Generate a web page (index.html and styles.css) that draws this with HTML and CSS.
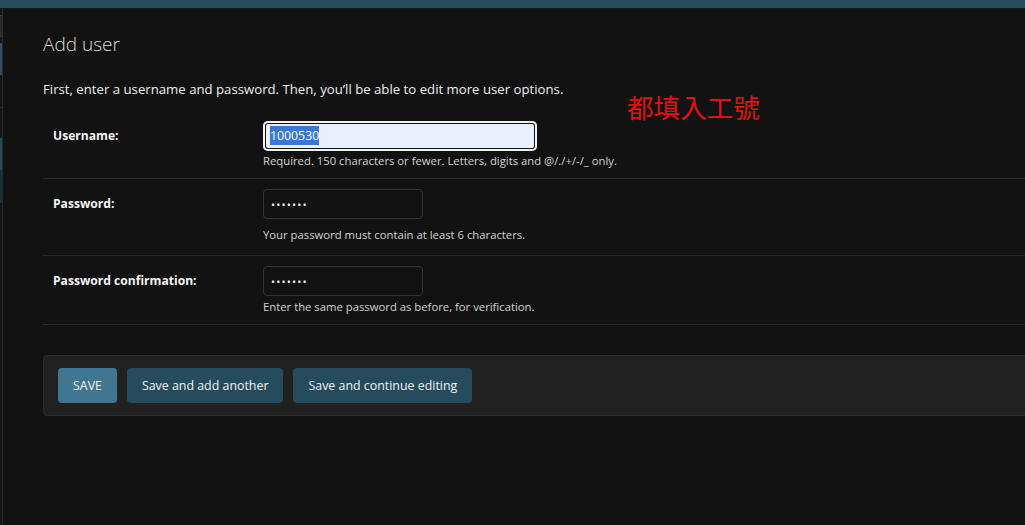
FILE: index.html
```html
<!DOCTYPE html>
<html lang="en">
<head>
<meta charset="utf-8">
<title>Add user</title>
<link rel="stylesheet" href="styles.css">
</head>
<body>
<header class="topbar"></header>
<div class="layout">
  <nav class="sidebar">
    <div class="sb-gap"></div>
    <div class="sb-search"></div>
    <div class="sb-gap"></div>
    <div class="sb-caption"></div>
    <div class="sb-row sb-row-line"></div>
    <div class="sb-row"></div>
    <div class="sb-caption sb-caption-alt"></div>
    <div class="sb-current"></div>
  </nav>
  <main class="content">
    <h1 class="title">Add user</h1>
    <p class="intro">First, enter a username and password. Then, you’ll be able to edit more user options.</p>
    <fieldset class="module">
      <div class="form-row row-first">
        <label class="field-label" for="id_username">Username:</label>
        <div class="field-box">
          <div class="fake-input focused" id="id_username"><span class="selected">1000530</span></div>
          <div class="help">Required. 150 characters or fewer. Letters, digits and @/./+/-/_ only.</div>
        </div>
      </div>
      <div class="form-row">
        <label class="field-label" for="id_password1">Password:</label>
        <div class="field-box">
          <input class="pw-input" type="password" id="id_password1" value="1234567">
          <div class="help help-list">Your password must contain at least 6 characters.</div>
        </div>
      </div>
      <div class="form-row">
        <label class="field-label" for="id_password2">Password confirmation:</label>
        <div class="field-box">
          <input class="pw-input" type="password" id="id_password2" value="1234567">
          <div class="help help-last">Enter the same password as before, for verification.</div>
        </div>
      </div>
    </fieldset>
    <div class="submit-row">
      <button class="btn btn-default" type="button">SAVE</button>
      <button class="btn" type="button">Save and add another</button>
      <button class="btn" type="button">Save and continue editing</button>
    </div>
  </main>
</div>
<div class="note">都填入工號</div>
</body>
</html>
```

FILE: styles.css
```css
html, body {
  margin: 0;
  padding: 0;
}

body {
  background: #121212;
  color: #eeeeee;
  font-family: "Open Sans", "Noto Sans", "Noto Sans CJK TC", sans-serif;
  height: 525px;
  overflow: hidden;
  position: relative;
}

.topbar {
  height: 8px;
  background: #264b5d;
  border-bottom: 1px solid #0f181c;
}

.layout {
  display: flex;
  height: 516px;
  overflow: hidden;
}

.sidebar {
  width: 2px;
  flex: 0 0 2px;
  background: #151515;
  border-right: 1px solid #2a2a2a;
  display: flex;
  flex-direction: column;
}

.sb-gap { height: 6px; }
.sb-search {
  height: 20px;
  background: #2a2a2a;
  border-top: 1px solid #3a3a3a;
  border-bottom: 1px solid #3a3a3a;
}
.sb-caption { height: 32px; background: #2b5266; }
.sb-caption-alt { background: #264b5d; }
.sb-row { height: 30px; }
.sb-row-line { height: 32px; border-bottom: 1px solid #2a2a2a; }
.sb-current { height: 33px; background: #0d393e; }

.content {
  flex: 1;
  min-width: 0;
  padding: 23px 0 0 40px;
}

.title {
  margin: 0 0 23px;
  font-size: 19px;
  font-weight: 300;
  line-height: 24px;
  color: #dcdcdc;
}

.intro {
  margin: 0;
  font-size: 13.2px;
  line-height: 20px;
  color: #eeeeee;
}

.module {
  margin: 12px 0 0;
  padding: 0;
  border: 0;
  min-width: 0;
}

.form-row {
  display: flex;
  padding: 10px;
  border-bottom: 1px solid #2a2a2a;
}

.field-label {
  flex: 0 0 210px;
  font-size: 12.1px;
  font-weight: 700;
  line-height: 30px;
  color: #f5f5f5;
}

.field-box {
  display: flex;
  flex-direction: column;
  align-items: flex-start;
}

.fake-input {
  box-sizing: border-box;
  width: 274px;
  height: 30px;
  padding: 0 7px;
  background: #e8f0fe;
  border-radius: 5px;
  box-shadow: inset 0 0 0 2px #f2f2f2, inset 0 0 0 3px #111111;
  font-size: 12.3px;
  line-height: 30px;
  color: #000;
}

.selected {
  background: #3a78d4;
  color: #ffffff;
  padding: 1px 0;
}

.pw-input {
  box-sizing: border-box;
  width: 160px;
  height: 30px;
  margin: 0;
  padding: 0 7px;
  background: #121212;
  border: 1px solid #353535;
  border-radius: 4px;
  color: #f0f0f0;
  font-family: "Open Sans", "DejaVu Sans", sans-serif;
  font-size: 11px;
  letter-spacing: 1.1px;
  outline: none;
}

.help {
  margin-top: 3px;
  font-size: 11.3px;
  line-height: 14px;
  color: #d2d2d2;
}

.help-list {
  margin-top: 9px;
  margin-bottom: 3px;
}

.help-last {
  margin-top: 4px;
}

.submit-row {
  display: flex;
  gap: 10px;
  margin: 30px -10px 0 0;
  padding: 12px 14px;
  background: #212121;
  border: 1px solid #2c2c2c;
  border-radius: 4px;
}

.btn {
  height: 35px;
  padding: 0 15px;
  border: 0;
  border-radius: 4px;
  background: #264b5d;
  color: #f2f2f2;
  font-family: "Open Sans", "Noto Sans", sans-serif;
  font-size: 12.4px;
  cursor: pointer;
}

.btn-default {
  background: #417690;
}

.note {
  position: absolute;
  left: 627px;
  top: 93px;
  font-family: "Noto Sans CJK TC", "Noto Sans CJK SC", sans-serif;
  font-size: 26.6px;
  line-height: 28px;
  color: #e31010;
  font-weight: 400;
}
```
